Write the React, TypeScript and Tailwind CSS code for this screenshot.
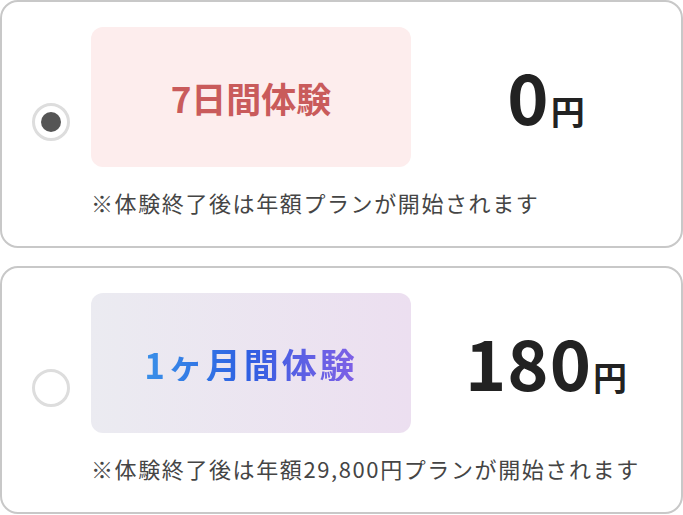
const Radio = ({ checked }: { checked: boolean }) => (
  <div className="w-[38px] h-[38px] shrink-0 rounded-full border-[3px] border-[#dddddd] flex items-center justify-center">
    {checked && <div className="w-[20px] h-[20px] rounded-full bg-[#555555]" />}
  </div>
);

type Plan = {
  checked: boolean;
  title: string;
  price: string;
  note: string;
  boxClass: string;
  titleClass: string;
};

const plans: Plan[] = [
  {
    checked: true,
    title: "7日間体験",
    price: "0",
    note: "※体験終了後は年額プランが開始されます",
    boxClass: "bg-[#fdeded]",
    titleClass: "text-[#c95b5b]",
  },
  {
    checked: false,
    title: "1ヶ月間体験",
    price: "180",
    note: "※体験終了後は年額29,800円プランが開始されます",
    boxClass: "bg-gradient-to-r from-[#ebebf1] to-[#ecdff0]",
    titleClass:
      "tracking-[3px] bg-gradient-to-r from-[#3a90e8] via-[#2f5ee2] to-[#8060e6] bg-clip-text text-transparent",
  },
];

const PlanCard = ({ plan }: { plan: Plan }) => (
  <div className="flex items-center border-2 border-[#c8c8c8] rounded-[18px] bg-white pl-[30px] pt-[25px] pb-[29px]">
    <Radio checked={plan.checked} />
    <div className="ml-[21px] flex-1 flex flex-col">
      <div className="flex items-center">
        <div
          className={`w-[320px] h-[140px] rounded-[12px] flex items-center justify-center ${plan.boxClass}`}
        >
          <span className={`text-[35px] font-bold leading-none ${plan.titleClass}`}>
            {plan.title}
          </span>
        </div>
        <div className="flex-1 flex items-baseline justify-center text-[#222222] -mt-[4px]">
          <span className="text-[70px] font-bold leading-none tracking-[1px]">{plan.price}</span>
          <span className="text-[34px] font-bold leading-none ml-[1px]">円</span>
        </div>
      </div>
      <p className="mt-[20px] text-[22px] leading-[30px] tracking-[1.6px] text-[#454545]">
        {plan.note}
      </p>
    </div>
  </div>
);

export default function App() {
  return (
    <div
      className="w-[683px] h-[515px] bg-white flex flex-col gap-[18px] overflow-hidden"
      style={{ fontFamily: '"Noto Sans CJK JP", "Noto Sans", sans-serif' }}
    >
      {plans.map((p) => (
        <PlanCard key={p.price} plan={p} />
      ))}
    </div>
  );
}
